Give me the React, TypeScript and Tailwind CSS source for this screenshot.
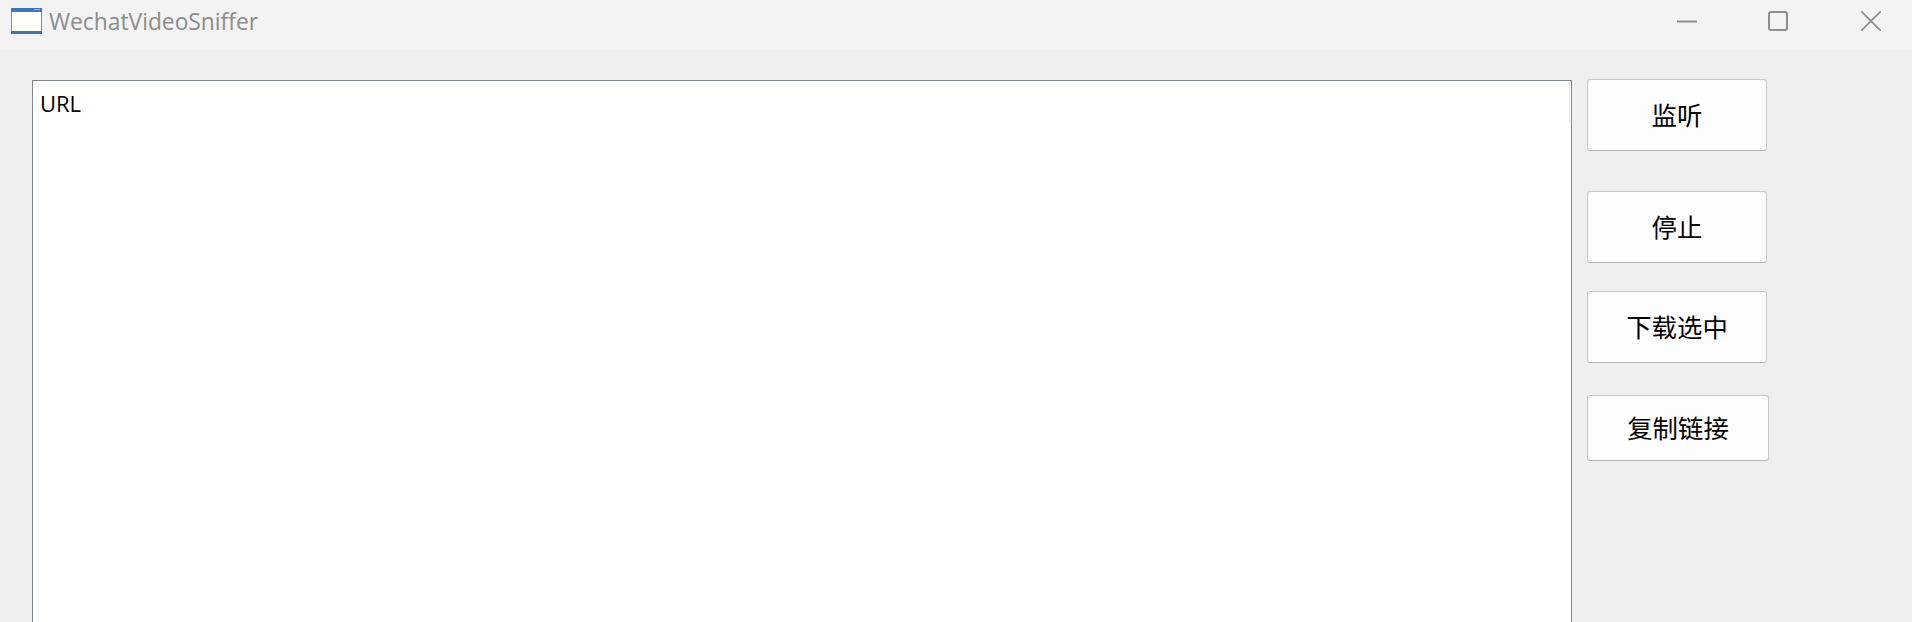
const buttonClass =
  "w-[180px] flex items-center justify-center bg-[#fdfdfd] border border-[#c8c8c8] border-b-[#b4b4b4] rounded-[3px] text-[25.4px] leading-none pt-[2px] text-black";

const WindowIcon = () => (
  <svg width="31" height="26" viewBox="0 0 31 26" className="shrink-0 -mt-[2px]">
    <rect x="0.5" y="0.5" width="30" height="25" fill="#fffffa" stroke="#6f8db5" />
    <rect x="0" y="0" width="31" height="4" fill="#3f74b8" />
    <rect x="23" y="1" width="6" height="1" fill="#9dbbe0" />
    <rect x="0" y="23" width="31" height="3" fill="#4f6f9f" />
  </svg>
);

const TitleBar = () => (
  <div className="h-[50px] shrink-0 bg-[#f3f3f3] flex items-center justify-between">
    <div className="flex items-center gap-[7px] pl-[11px] -mt-[6px]">
      <WindowIcon />
      <span className="text-[22.8px] leading-none text-[#8c8c8c]">WechatVideoSniffer</span>
    </div>
    <div className="flex items-center gap-[72px] pr-[31px] -mt-[8px] text-[#8f8f8f]">
      <svg width="20" height="20" viewBox="0 0 20 20" fill="none" stroke="currentColor" strokeWidth="2">
        <path d="M0 10.5H20" />
      </svg>
      <svg width="20" height="20" viewBox="0 0 20 20" fill="none" stroke="currentColor" strokeWidth="2" className="-ml-[1px]">
        <rect x="1" y="1" width="18" height="18" rx="2" />
      </svg>
      <svg width="20" height="20" viewBox="0 0 20 20" fill="none" stroke="currentColor" strokeWidth="1.6" className="ml-[1px]">
        <path d="M0 0L20 20M20 0L0 20" />
      </svg>
    </div>
  </div>
);

export default function App() {
  return (
    <div
      className="h-[622px] w-[1912px] overflow-hidden flex flex-col bg-[#efefef]"
      style={{ fontFamily: '"Open Sans", "Noto Sans CJK SC", sans-serif' }}
    >
      <TitleBar />
      <div className="flex flex-1 min-h-0 pl-[32px]">
        <div className="mt-[30px] w-[1540px] h-[600px] shrink-0 bg-white border border-[#7f8790] pr-[1px]">
          <div className="h-[42px] border-r border-[#e6e6e6] pl-[7px] pt-[1px] flex items-center text-[22px] leading-none text-black">
            URL
          </div>
        </div>
        <div className="ml-[15px] mt-[29px] flex flex-col">
          <button className={`${buttonClass} h-[72px]`}>监听</button>
          <button className={`${buttonClass} h-[72px] mt-[40px]`}>停止</button>
          <button className={`${buttonClass} h-[72px] mt-[28px]`}>下载选中</button>
          <button className={`${buttonClass} h-[66px] mt-[32px] w-[182px]`}>复制链接</button>
        </div>
      </div>
    </div>
  );
}
